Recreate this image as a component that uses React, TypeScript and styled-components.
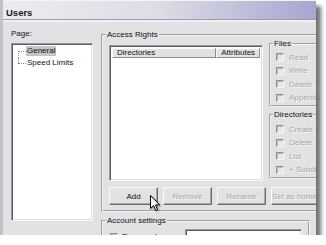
import { createGlobalStyle, styled } from 'styled-components';

const GlobalStyle = createGlobalStyle`
  html, body {
    margin: 0;
    padding: 0;
    background: #fff;
  }
  body {
    font-family: "Liberation Sans", Arial, sans-serif;
    font-size: 8px;
    color: #111;
  }
`;

const Window = styled.div`
  position: relative;
  width: 313px;
  height: 235px;
  background: #e2e2e5;
  border-left: 3px solid #c2c2cc;
  overflow: hidden;
  box-shadow: 5px 6px 4px rgba(0, 0, 0, 0.55);
`;

const TitleBar = styled.div`
  height: 20px;
  box-sizing: border-box;
  display: flex;
  align-items: flex-end;
  padding: 0 0 1px 3px;
  border-top: 1px solid #f4f4f6;
  border-bottom: 1px solid #9c9cb4;
  background: linear-gradient(to right, #ececf0 0%, #dcdce6 50%, #a6a6cf 100%);
  font-weight: bold;
  font-size: 9.5px;
  line-height: 11px;
  color: #1a1a1a;
`;

const Body = styled.div`
  display: flex;
  gap: 8px;
  padding: 7px 0 0 8px;
  border-top: 2px solid #f0f0f2;
`;

const LeftPane = styled.div`
  width: 82px;
  flex: none;
  display: flex;
  flex-direction: column;
`;

const Label = styled.div`
  line-height: 10px;
  height: 10px;
  margin-bottom: 4px;
`;

const Sunken = styled.div`
  box-sizing: border-box;
  background: #fff;
  border: 1px solid;
  border-color: #9a9a9a #fafafa #fafafa #9a9a9a;
  box-shadow: inset 1px 1px 0 #5c5c5c, inset -1px -1px 0 #dedede;
`;

const Tree = styled(Sunken)`
  height: 178px;
  padding: 2px 0 0 6px;
`;

const TreeRow = styled.div`
  display: flex;
  height: 12px;
`;

const Connector = styled.span<{ $last?: boolean }>`
  position: relative;
  width: 8px;
  flex: none;
  &::before {
    content: '';
    position: absolute;
    left: 0;
    top: ${(p) => (p.$last ? '0' : '5px')};
    height: ${(p) => (p.$last ? '5px' : '7px')};
    border-left: 1px dotted #8a8a8a;
  }
  &::after {
    content: '';
    position: absolute;
    left: 0;
    top: 5px;
    width: 8px;
    border-top: 1px dotted #8a8a8a;
  }
`;

const TreeLabel = styled.span<{ $selected?: boolean }>`
  line-height: 10px;
  height: 10px;
  padding: 0 1px;
  background: ${(p) => (p.$selected ? '#c4c4ca' : 'transparent')};
`;

const RightPane = styled.div`
  display: flex;
  flex-direction: column;
  gap: 4px;
  margin-top: 1px;
  flex: none;
`;

const Group = styled.fieldset<{ $width?: number }>`
  margin: 0;
  min-width: 0;
  box-sizing: border-box;
  border: 2px groove #f4f4f4;
  padding: 0 6px 5px 6px;
  ${(p) => (p.$width ? `width: ${p.$width}px;` : '')}
`;

const Legend = styled.legend<{ $small?: boolean }>`
  padding: 0 1px;
  margin-left: -3px;
  line-height: ${(p) => (p.$small ? '8px' : '10px')};
  font-size: 8px;
  color: #111;
`;

const TopRow = styled.div`
  display: flex;
  gap: 6px;
`;

const ListBox = styled(Sunken)`
  width: 154px;
  height: 136px;
  margin-top: 5px;
  padding: 2px;
  flex: none;
`;

const Header = styled.div`
  display: flex;
  height: 10px;
`;

const HeaderCell = styled.div<{ $w: number }>`
  width: ${(p) => p.$w}px;
  box-sizing: border-box;
  background: #e2e2e5;
  border: 1px solid;
  border-color: #fafafa #8c8c8c #8c8c8c #fafafa;
  line-height: 8px;
  padding-left: 4px;
  white-space: nowrap;
  overflow: hidden;
`;

const SideColumn = styled.div`
  display: flex;
  flex-direction: column;
  gap: 4.5px;
  width: 62px;
  flex: none;
`;

const CheckGroup = styled(Group)<{ $top: number }>`
  padding: ${(p) => p.$top}px 0 0 5px;
  width: 62px;
`;

const CheckRow = styled.div`
  display: flex;
  align-items: center;
  gap: 5px;
  height: 13.5px;
  white-space: nowrap;
`;

const Box = styled.span`
  width: 8px;
  height: 8px;
  box-sizing: border-box;
  flex: none;
  background: #e6e6e8;
  border: 1px solid;
  border-color: #8e8e8e #f6f6f6 #f6f6f6 #8e8e8e;
  box-shadow: inset 1px 1px 0 #bdbdbd;
`;

const Dim = styled.span`
  color: #a6a6a8;
  text-shadow: 1px 1px 0 #f8f8f8;
`;

const ButtonRow = styled.div`
  display: flex;
  gap: 5px;
  margin-top: 6px;
`;

const Button = styled.button<{ $disabled?: boolean }>`
  width: 49px;
  height: 18px;
  flex: none;
  padding: 0;
  font-family: inherit;
  font-size: 8px;
  white-space: nowrap;
  overflow: hidden;
  background: #e2e2e5;
  color: ${(p) => (p.$disabled ? '#a6a6a8' : '#111')};
  text-shadow: ${(p) => (p.$disabled ? '1px 1px 0 #f8f8f8' : 'none')};
  border: 1px solid;
  border-color: #fcfcfc #6c6c6c #6c6c6c #fcfcfc;
  box-shadow: inset -1px -1px 0 #a8a8a8;
`;

const AccountRow = styled.div`
  display: flex;
  align-items: flex-start;
  padding-right: 0;
`;

const PasswordCheck = styled.div`
  display: flex;
  align-items: center;
  gap: 4px;
  margin: 6px 0 0 1px;
`;

const TextBox = styled(Sunken)`
  width: 117px;
  height: 20px;
  margin: 2.5px 0 0 auto;
`;

const Cursor = styled.svg`
  position: absolute;
  left: 147px;
  top: 195px;
  filter: drop-shadow(1px 1px 1px rgba(0, 0, 0, 0.35));
`;

function App() {
  return (
    <>
      <GlobalStyle />
      <Window>
        <TitleBar>Users</TitleBar>
        <Body>
          <LeftPane>
            <Label>Page:</Label>
            <Tree>
              <TreeRow>
                <Connector />
                <TreeLabel $selected>General</TreeLabel>
              </TreeRow>
              <TreeRow>
                <Connector $last />
                <TreeLabel>Speed Limits</TreeLabel>
              </TreeRow>
            </Tree>
          </LeftPane>

          <RightPane>
            <Group>
              <Legend>Access Rights</Legend>
              <TopRow>
                <ListBox>
                  <Header>
                    <HeaderCell $w={105}>Directories</HeaderCell>
                    <HeaderCell $w={44}>Attributes</HeaderCell>
                  </Header>
                </ListBox>
                <SideColumn>
                  <CheckGroup $top={2.5}>
                    <Legend $small>Files</Legend>
                    {['Read', 'Write', 'Delete', 'Append'].map((t) => (
                      <CheckRow key={t}>
                        <Box />
                        <Dim>{t}</Dim>
                      </CheckRow>
                    ))}
                  </CheckGroup>
                  <CheckGroup $top={3.5}>
                    <Legend $small>Directories</Legend>
                    {['Create', 'Delete', 'List', '+ Subdirs'].map((t) => (
                      <CheckRow key={t}>
                        <Box />
                        <Dim>{t}</Dim>
                      </CheckRow>
                    ))}
                  </CheckGroup>
                </SideColumn>
              </TopRow>
              <ButtonRow>
                <Button>Add</Button>
                <Button $disabled>Remove</Button>
                <Button $disabled>Rename</Button>
                <Button $disabled>Set as home dir</Button>
              </ButtonRow>
            </Group>

            <Group $width={209}>
              <Legend>Account settings</Legend>
              <AccountRow>
                <PasswordCheck>
                  <Box />
                  <span>Password:</span>
                </PasswordCheck>
                <TextBox />
              </AccountRow>
            </Group>
          </RightPane>
        </Body>

        <Cursor width="11" height="17" viewBox="0 0 11 17">
          <path
            d="M0.5 0.5 L0.5 13.5 L3.6 10.6 L5.8 15.6 L7.6 14.8 L5.5 9.9 L9.6 9.9 Z"
            fill="#fff"
            stroke="#000"
            strokeWidth="1"
            strokeLinejoin="miter"
          />
        </Cursor>
      </Window>
    </>
  );
}

export default App;
